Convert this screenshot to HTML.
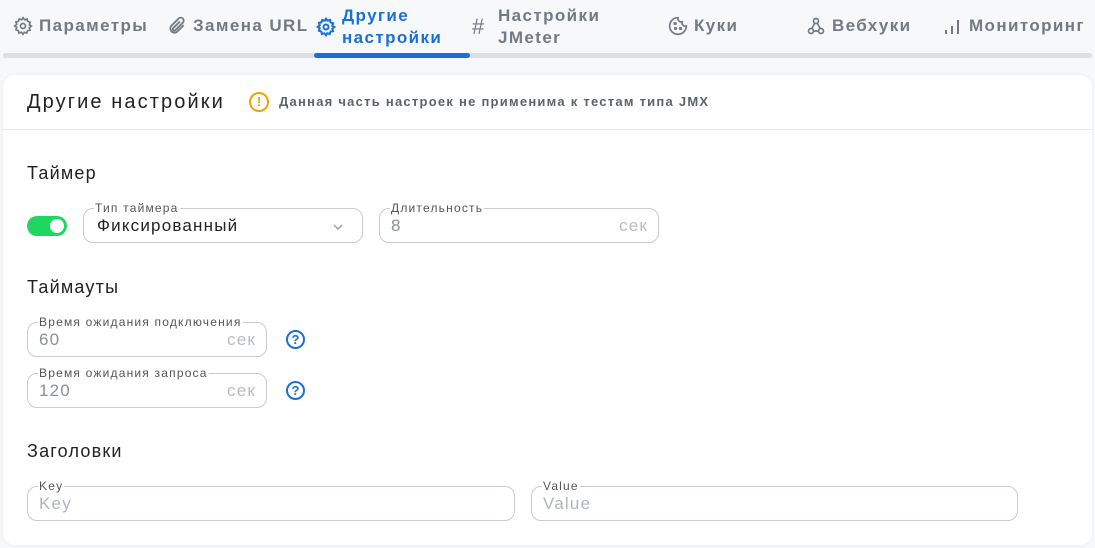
<!DOCTYPE html>
<html><head><meta charset="utf-8"><style>
*{box-sizing:border-box;margin:0;padding:0}
body{width:1095px;height:548px;background:#f6f8f9;font-family:"Liberation Sans",sans-serif;position:relative;overflow:hidden;color:#222;letter-spacing:1.2px}
.tab{position:absolute;font-size:17px;font-weight:bold;color:#737a85;display:flex;align-items:center;gap:6px;white-space:nowrap;letter-spacing:1.4px}
.tab svg{flex:none}
.bar{position:absolute;left:3px;top:53px;width:1089px;height:5px;border-radius:3px;background:#dcdfe3}
.abar{position:absolute;left:314px;top:53px;width:156px;height:5px;border-radius:3px;background:#1b6fd8}
.card{position:absolute;left:3px;top:75px;width:1089px;height:470px;background:#fff;border-radius:12px;box-shadow:0 0 4px rgba(0,0,0,.06)}
.hdr{position:absolute;left:0;top:54px;width:100%;height:1px;background:#e8eaed}
.t{position:absolute;font-size:18px;color:#222}
.f{position:absolute;border:1px solid #c8ccd2;border-radius:10px;height:35px}
.f .l{position:absolute;top:-8px;left:10px;font-size:12px;color:#555;background:#fff;padding:0 1px;line-height:14px}
.f .v{position:absolute;left:11px;top:7px;font-size:17px;color:#8a9099}
.f .s{position:absolute;right:10px;top:7px;font-size:17px;color:#b8bcc2}
.q{position:absolute;width:19px;height:19px;border:2px solid #1b6fd8;border-radius:50%;color:#1b6fd8;font-size:13px;font-weight:bold;text-align:center;line-height:15px;letter-spacing:0}
</style></head><body>
<div class="tab" style="left:13px;top:16px"><svg width="20" height="20" viewBox="0 0 24 24" fill="none" stroke="#737a85" stroke-width="2"><circle cx="12" cy="12" r="3"/><path d="M12 2l2 2.5 3-1 .5 3 3 1-1 3L22 12l-2.5 2 1 3-3 .5-1 3-3-1L12 22l-2-2.5-3 1-.5-3-3-1 1-3L2 12l2.5-2-1-3 3-.5 1-3 3 1z"/></svg>Параметры</div>
<div class="tab" style="left:167px;top:16px"><svg width="20" height="20" viewBox="0 0 24 24" fill="none" stroke="#737a85" stroke-width="2.2"><path d="M20 11l-8 8a5 5 0 0 1-7-7l9-9a3.3 3.3 0 0 1 5 5l-9 9a1.7 1.7 0 0 1-2.5-2.5l8-8"/></svg>Замена URL</div>
<div class="tab" style="left:316px;top:5px;color:#1b6fd8"><svg width="20" height="20" viewBox="0 0 24 24" fill="none" stroke="#1b6fd8" stroke-width="2.4"><circle cx="12" cy="12" r="3"/><path d="M12 2l2 2.5 3-1 .5 3 3 1-1 3L22 12l-2.5 2 1 3-3 .5-1 3-3-1L12 22l-2-2.5-3 1-.5-3-3-1 1-3L2 12l2.5-2-1-3 3-.5 1-3 3 1z"/></svg><span style="line-height:22px">Другие<br>настройки</span></div>
<div class="tab" style="left:472px;top:5px"><span style="font-size:22px;font-weight:normal;width:20px">#</span><span style="line-height:22px">Настройки<br>JMeter</span></div>
<div class="tab" style="left:668px;top:16px"><svg width="20" height="20" viewBox="0 0 24 24" fill="none" stroke="#737a85" stroke-width="2"><path d="M12 2a10 10 0 1 0 10 10 4 4 0 0 1-5-5 4 4 0 0 1-5-5z"/><circle cx="8.5" cy="9" r="1" fill="#737a85"/><circle cx="9" cy="15" r="1" fill="#737a85"/><circle cx="15" cy="15" r="1" fill="#737a85"/></svg>Куки</div>
<div class="tab" style="left:806px;top:16px"><svg width="20" height="20" viewBox="0 0 24 24" fill="none" stroke="#737a85" stroke-width="2"><circle cx="12" cy="6" r="3"/><circle cx="6" cy="18" r="3"/><circle cx="18" cy="18" r="3"/><path d="M10.5 8.5L7 15M9 18h6M13.5 8.5L17 15"/></svg>Вебхуки</div>
<div class="tab" style="left:943px;top:16px"><svg width="20" height="20" viewBox="0 0 20 20" stroke="#737a85" stroke-width="2"><path d="M3 14v4M9 10v8M15 4v14"/></svg>Мониторинг</div>
<div class="bar"></div><div class="abar"></div>
<div class="card">
<div class="t" style="left:24px;top:16px;font-size:20px;letter-spacing:2.1px">Другие настройки</div>
<div class="q" style="left:246px;top:17px;border-color:#e6a700;color:#e6a700;width:20px;height:20px">!</div>
<div style="position:absolute;left:276px;top:19px;font-size:13px;font-weight:bold;color:#5d636c;letter-spacing:1.25px">Данная часть настроек не применима к тестам типа JMX</div>
<div class="hdr"></div>
<div class="t" style="left:24px;top:88px">Таймер</div>
<div style="position:absolute;left:24px;top:141px;width:40px;height:20px;border-radius:10px;background:#1ed760"><div style="position:absolute;right:3px;top:3px;width:14px;height:14px;border-radius:50%;background:#fff"></div></div>
<div class="f" style="left:80px;top:133px;width:280px"><span class="l">Тип таймера</span><span class="v" style="color:#222;left:13px">Фиксированный</span><svg style="position:absolute;right:18px;top:14px" width="12" height="8" viewBox="0 0 12 8" fill="none" stroke="#9aa0a8" stroke-width="1.5"><path d="M2 2l4 4 4-4"/></svg></div>
<div class="f" style="left:376px;top:133px;width:280px"><span class="l">Длительность</span><span class="v">8</span><span class="s">сек</span></div>
<div class="t" style="left:24px;top:202px">Таймауты</div>
<div class="f" style="left:24px;top:247px;width:240px"><span class="l">Время ожидания подключения</span><span class="v">60</span><span class="s">сек</span></div>
<div class="q" style="left:283px;top:255px">?</div>
<div class="f" style="left:24px;top:298px;width:240px"><span class="l">Время ожидания запроса</span><span class="v">120</span><span class="s">сек</span></div>
<div class="q" style="left:283px;top:306px">?</div>
<div class="t" style="left:24px;top:366px">Заголовки</div>
<div class="f" style="left:24px;top:411px;width:488px"><span class="l">Key</span><span class="v" style="color:#b0b5bc">Key</span></div>
<div class="f" style="left:528px;top:411px;width:487px"><span class="l">Value</span><span class="v" style="color:#b0b5bc">Value</span></div>
</div>
</body></html>
